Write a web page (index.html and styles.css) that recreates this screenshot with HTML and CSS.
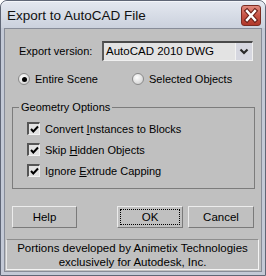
FILE: index.html
```html
<!DOCTYPE html>
<html>
<head>
<meta charset="utf-8">
<link rel="stylesheet" href="styles.css">
</head>
<body>
<div class="window">
  <div class="titlebar">
    <span class="title">Export to AutoCAD File</span>
    <div class="close">
      <svg width="20" height="21" viewBox="0 0 20 21">
        <path d="M6 6 L14 15 M14 6 L6 15" stroke="#6a2018" stroke-width="4.6" stroke-linecap="square" fill="none"/>
        <path d="M6 6 L14 15 M14 6 L6 15" stroke="#ffffff" stroke-width="2.4" stroke-linecap="square" fill="none"/>
      </svg>
    </div>
  </div>
  <div class="client">
    <div class="row-version">
      <span class="label">Export version:</span>
      <div class="select">
        <span class="select-value">AutoCAD 2010 DWG</span>
        <span class="select-btn">
          <svg width="10" height="7" viewBox="0 0 10 7"><polyline points="1.5,1.5 5,5 8.5,1.5" fill="none" stroke="#2a2a2a" stroke-width="2.2"/></svg>
        </span>
      </div>
    </div>
    <div class="row-radios">
      <div class="radio"><span class="radio-dot checked"></span><span>Entire Scene</span></div>
      <div class="radio"><span class="radio-dot"></span><span>Selected Objects</span></div>
    </div>
    <fieldset class="group">
      <legend>Geometry Options</legend>
      <div class="check-row"><span class="checkbox"><svg width="9" height="9" viewBox="0 0 9 9"><polyline points="1,4 3.3,6.5 8,1.5" fill="none" stroke="#000" stroke-width="2"/></svg></span><span>Convert <u>I</u>nstances to Blocks</span></div>
      <div class="check-row"><span class="checkbox"><svg width="9" height="9" viewBox="0 0 9 9"><polyline points="1,4 3.3,6.5 8,1.5" fill="none" stroke="#000" stroke-width="2"/></svg></span><span>Skip <u>H</u>idden Objects</span></div>
      <div class="check-row"><span class="checkbox"><svg width="9" height="9" viewBox="0 0 9 9"><polyline points="1,4 3.3,6.5 8,1.5" fill="none" stroke="#000" stroke-width="2"/></svg></span><span>Ignore <u>E</u>xtrude Capping</span></div>
    </fieldset>
    <div class="buttons">
      <div class="btn btn-help">Help</div>
      <div class="btn btn-ok"><span class="focus">OK</span></div>
      <div class="btn btn-cancel">Cancel</div>
    </div>
    <div class="credits">
      <div>Portions developed by Animetix Technologies</div>
      <div>exclusively for Autodesk, Inc.</div>
    </div>
  </div>
</div>
</body>
</html>
```
FILE: styles.css
```css
html, body {
  margin: 0;
  padding: 0;
  background: #ffffff;
}
.window {
  box-sizing: border-box;
  width: 266px;
  height: 276px;
  overflow: hidden;
  background: #c3c9d6;
  border: 1px solid #5f6676;
  border-radius: 7px 7px 0 0;
  padding: 0 3px 3px 3px;
  font-family: "Liberation Sans", Arial, sans-serif;
  font-size: 11px;
  color: #000;
}
.titlebar {
  height: 27px;
  display: flex;
  align-items: flex-start;
  justify-content: space-between;
  background: linear-gradient(#e4e8f0, #cbd1dd);
  margin: 0 -3px;
  padding: 0 4px 0 6px;
  border-radius: 6px 6px 0 0;
  box-shadow: inset 0 1px 0 #f4f6fa;
}
.title {
  font-size: 13.5px;
  line-height: 16px;
  margin-top: 7px;
  color: #111;
}
.close {
  box-sizing: border-box;
  width: 20px;
  height: 21px;
  margin-top: 4px;
  border: 1px solid #7b2c22;
  border-radius: 3px;
  background: linear-gradient(#e08a7e, #c85446 50%, #b0382a);
  display: flex;
  align-items: center;
  justify-content: center;
}
.close svg {
  display: block;
  margin: -1px;
}
.client {
  background: #c0c0c0;
  border: 1px solid #878c98;
  height: 244px;
  box-sizing: border-box;
  display: flex;
  flex-direction: column;
}
.row-version {
  display: flex;
  align-items: center;
  margin-top: 12px;
  padding-left: 14px;
  height: 20px;
}
.label {
  width: 83px;
}
.select {
  box-sizing: border-box;
  width: 151px;
  height: 20px;
  display: flex;
  border-top: 2px solid #4a4a4a;
  border-left: 2px solid #5a5a5a;
  border-right: 1px solid #f0f0f0;
  border-bottom: 1px solid #f0f0f0;
  background: #e3e3e3;
}
.select-value {
  flex: 1;
  padding-left: 2px;
  line-height: 17px;
  font-size: 11.5px;
}
.select-btn {
  width: 16px;
  display: flex;
  align-items: center;
  justify-content: center;
  background: #d6d7e0;
  border-left: 1px solid #f2f2f2;
}
.row-radios {
  display: grid;
  grid-template-columns: 114px 1fr;
  margin-top: 11px;
  padding-left: 13px;
  height: 14px;
  align-items: center;
}
.radio {
  display: flex;
  align-items: center;
  gap: 5px;
}
.radio-dot {
  box-sizing: border-box;
  width: 12px;
  height: 12px;
  border-radius: 50%;
  border: 1px solid #8a8a8a;
  background: radial-gradient(circle at 40% 35%, #ffffff, #d8d8d8 70%, #c4c4c4);
  position: relative;
}
.radio-dot.checked::after {
  content: "";
  position: absolute;
  left: 2.5px;
  top: 2.5px;
  width: 5px;
  height: 5px;
  border-radius: 50%;
  background: #000;
}
.group {
  box-sizing: border-box;
  margin: 14px 0 0 7px;
  width: 243px;
  height: 89px;
  border: 1px solid #7c7c7c;
  padding: 4px 0 0 14px;
  min-width: 0;
}
.group legend {
  padding: 0 2px;
  margin-left: -8px;
  line-height: 14px;
}
.check-row {
  display: flex;
  align-items: center;
  gap: 5px;
  height: 21px;
}
.checkbox {
  box-sizing: border-box;
  width: 13px;
  height: 13px;
  border-top: 2px solid #555;
  border-left: 2px solid #555;
  border-right: 1px solid #f2f2f2;
  border-bottom: 1px solid #f2f2f2;
  background: #e2e2e2;
  display: flex;
  align-items: center;
  justify-content: center;
}
.checkbox svg {
  display: block;
}
.check-row u {
  text-decoration: underline;
  text-underline-offset: 1px;
}
.buttons {
  display: flex;
  margin-top: 17px;
  padding-left: 7px;
  height: 22px;
}
.btn {
  box-sizing: border-box;
  height: 22px;
  display: flex;
  align-items: center;
  justify-content: center;
  border-top: 1px solid #ececec;
  border-left: 1px solid #ececec;
  border-right: 1px solid #7a7a7a;
  border-bottom: 1px solid #7a7a7a;
  background: #c0c0c0;
  font-size: 11.5px;
}
.btn-help {
  width: 65px;
}
.btn-ok {
  width: 66px;
  margin-left: 40px;
  padding: 2px;
}
.btn-cancel {
  width: 66px;
  margin-left: 5px;
}
.focus {
  box-sizing: border-box;
  width: 100%;
  height: 100%;
  border: 1px dotted #000;
  display: flex;
  align-items: center;
  justify-content: center;
}
.credits {
  box-sizing: border-box;
  margin: 11px 0 0 1px;
  width: 253px;
  height: 31px;
  border-top: 1px solid #8e8e8e;
  border-left: 1px solid #e8e8e8;
  border-right: 1px solid #f4f4f4;
  border-bottom: 1px solid #f4f4f4;
  text-align: center;
  line-height: 14px;
  padding-top: 1px;
  font-size: 11.5px;
}
```
